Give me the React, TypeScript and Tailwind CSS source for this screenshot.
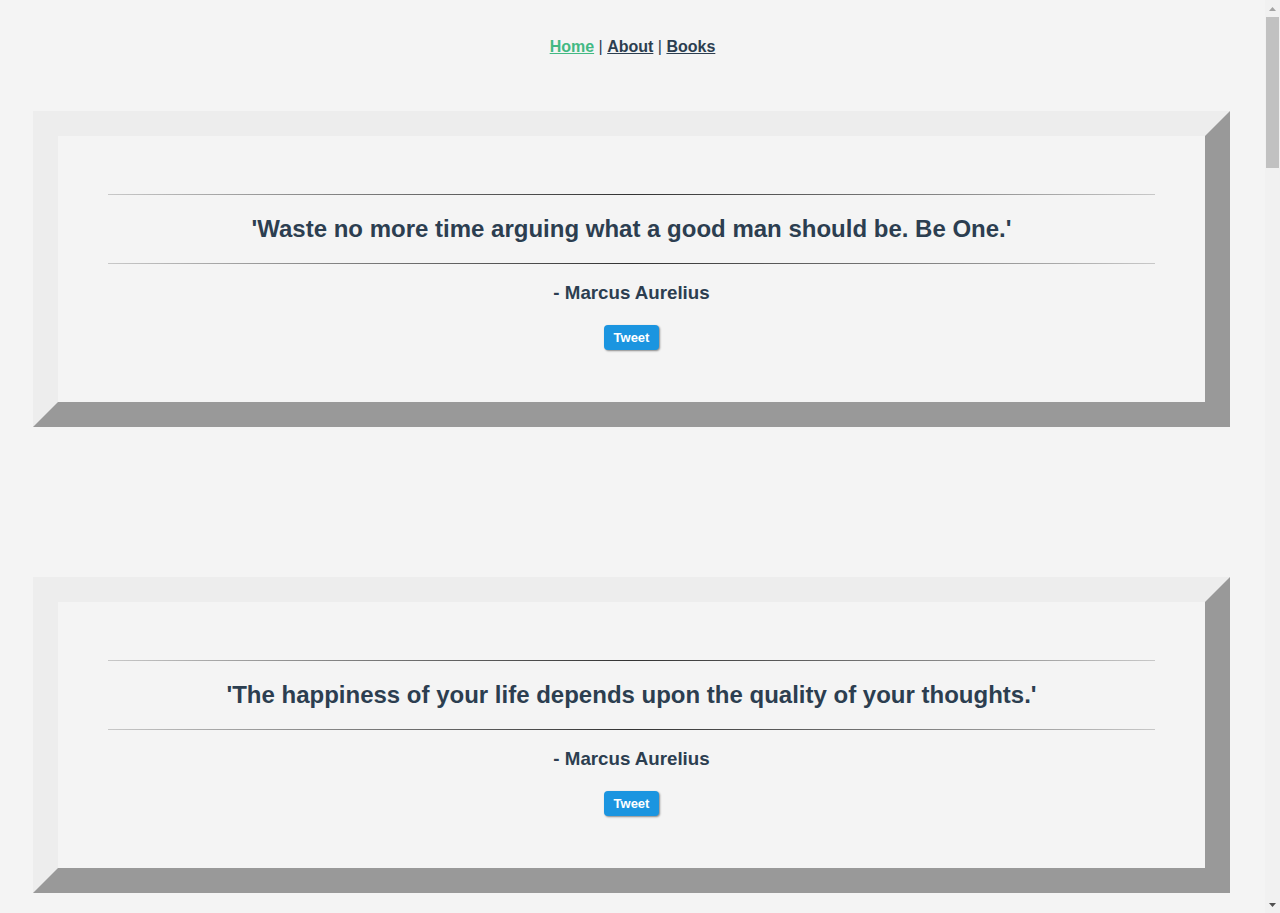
import React from 'react';

/**
 * A single quote entry.
 */
interface Quote {
  text: string;
  author: string;
}

const QUOTES: Quote[] = [
  { text: 'Waste no more time arguing what a good man should be. Be One.', author: 'Marcus Aurelius' },
  { text: 'The happiness of your life depends upon the quality of your thoughts.', author: 'Marcus Aurelius' },
  { text: 'You have power over your mind - not outside events. Realize this, and you will find strength.', author: 'Marcus Aurelius' },
  { text: 'Very little is needed to make a happy life.', author: 'Marcus Aurelius' },
  { text: 'The best revenge is to be unlike him who performed the injury.', author: 'Marcus Aurelius' },
  { text: 'If it is not right, do not do it; if it is not true, do not say it.', author: 'Marcus Aurelius' },
  { text: 'Accept the things to which fate binds you.', author: 'Marcus Aurelius' },
  { text: 'Everything we hear is an opinion, not a fact.', author: 'Marcus Aurelius' },
  { text: 'The soul becomes dyed with the colour of its thoughts.', author: 'Marcus Aurelius' },
  { text: 'Loss is nothing else but change, and change is Nature\'s delight.', author: 'Marcus Aurelius' },
  { text: 'Dwell on the beauty of life.', author: 'Marcus Aurelius' },
];

// Faded rule above and below the quote
const Rule: React.FC = () => (
  <div className="h-px w-full bg-linear-to-r from-[#c8c8c8] via-[#333333] to-[#c8c8c8]" />
);

const QuoteCard: React.FC<{ quote: Quote }> = ({ quote }) => (
  <div className="ml-[33px] mr-[35px] mb-[150px] border-[25px] border-solid border-t-[#ededed] border-l-[#ededed] border-b-[#999999] border-r-[#999999]">
    <div className="px-[50px] pt-[58px] pb-[52px] text-center">
      <Rule />
      <h2 className="py-[20px] text-[24px] leading-[28px] font-bold">
        &apos;{quote.text}&apos;
      </h2>
      <Rule />
      <h3 className="mt-[18px] text-[18.72px] leading-[21px] font-bold">
        - {quote.author}
      </h3>
      <div className="mt-[22px] flex justify-center">
        <button
          type="button"
          className="h-[25px] w-[55px] rounded-[4px] bg-[#1b95e0] text-[13px] font-bold text-white shadow-[1px_1px_2px_#888]"
        >
          Tweet
        </button>
      </div>
    </div>
  </div>
);

// Browser-style vertical scrollbar drawn over the right edge
const Scrollbar: React.FC = () => (
  <div className="fixed right-0 top-0 flex h-screen w-[15px] flex-col items-center bg-[#f1f1f1]">
    <div className="flex h-[17px] w-full items-center justify-center">
      <svg width="7" height="4" viewBox="0 0 7 4">
        <path d="M3.5 0L7 4H0z" fill="#a3a3a3" />
      </svg>
    </div>
    <div className="mt-0 h-[151px] w-[13px] bg-[#c1c1c1]" />
    <div className="flex-1" />
    <div className="flex h-[17px] w-full items-center justify-center">
      <svg width="7" height="4" viewBox="0 0 7 4">
        <path d="M0 0H7L3.5 4z" fill="#505050" />
      </svg>
    </div>
  </div>
);

export default function App() {
  return (
    <div className="min-h-screen bg-[#f4f4f4] text-[#2c3e50] font-['Liberation_Sans',Arial,sans-serif]">
      <div className="w-[1265px]">
        <nav className="pt-[38px] pb-[55px] text-center text-[16px] leading-[18px] font-bold">
          <a href="#" className="text-[#42b983] underline">Home</a>
          <span className="font-normal">{' | '}</span>
          <a href="#" className="underline">About</a>
          <span className="font-normal">{' | '}</span>
          <a href="#" className="underline">Books</a>
        </nav>
        {QUOTES.map((q) => (
          <QuoteCard key={q.text} quote={q} />
        ))}
      </div>
      <Scrollbar />
    </div>
  );
}
